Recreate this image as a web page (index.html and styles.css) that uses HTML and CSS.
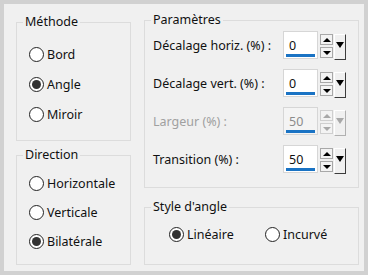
FILE: index.html
```html
<!DOCTYPE html>
<html>
<head>
  <title>Angle</title>
  <link rel="stylesheet" href="styles.css">
</head>
<body>
  <div class="window">
    <div class="col">
      <fieldset class="group method">
        <legend>Méthode</legend>
        <div class="options">
          <label class="option"><span class="radio"></span>Bord</label>
          <label class="option"><span class="radio checked"></span>Angle</label>
          <label class="option"><span class="radio"></span>Miroir</label>
        </div>
      </fieldset>
      <fieldset class="group direction">
        <legend>Direction</legend>
        <div class="options">
          <label class="option"><span class="radio"></span>Horizontale</label>
          <label class="option"><span class="radio"></span>Verticale</label>
          <label class="option"><span class="radio checked"></span>Bilatérale</label>
        </div>
      </fieldset>
    </div>
    <div class="col">
      <fieldset class="group params">
        <legend>Paramètres</legend>
        <div class="rows">
          <div class="row">
            <label>Décalage horiz. (%) :</label>
            <div class="spin">
              <span class="field">0</span>
              <span class="steps"><span class="step up"></span><span class="step down"></span></span>
              <span class="drop"></span>
            </div>
          </div>
          <div class="row">
            <label>Décalage vert. (%) :</label>
            <div class="spin">
              <span class="field">0</span>
              <span class="steps"><span class="step up"></span><span class="step down"></span></span>
              <span class="drop"></span>
            </div>
          </div>
          <div class="row disabled">
            <label>Largeur (%) :</label>
            <div class="spin">
              <span class="field">50</span>
              <span class="steps"><span class="step up"></span><span class="step down"></span></span>
              <span class="drop"></span>
            </div>
          </div>
          <div class="row">
            <label>Transition (%) :</label>
            <div class="spin">
              <span class="field">50</span>
              <span class="steps"><span class="step up"></span><span class="step down"></span></span>
              <span class="drop"></span>
            </div>
          </div>
        </div>
      </fieldset>
      <fieldset class="group corner">
        <legend>Style d'angle</legend>
        <div class="options">
          <label class="option"><span class="radio checked"></span>Linéaire</label>
          <label class="option"><span class="radio"></span>Incurvé</label>
        </div>
      </fieldset>
    </div>
  </div>
</body>
</html>
```
FILE: styles.css
```css
body {margin: 0; font: 12.5px "Noto Sans", "Open Sans", sans-serif; color: #111;}

.window {
  box-sizing: border-box;
  width: 368px;
  height: 275px;
  border: 4px solid #d1d1d1;
  background: #f0f0f0;
  display: grid;
  grid-template-columns: 115px 215px;
  column-gap: 13px;
  align-items: start;
  padding: 8px 5px 0 12px;
}

.col {display: flex; flex-direction: column;}
.col:first-child {margin-top: 2px; gap: 6px;}
.col:last-child {gap: 11px;}

.group {
  margin: 0;
  padding: 0;
  min-width: 0;
  border: 1px solid #dcdcdc;
}
.group legend {
  margin-left: 6px;
  padding: 0 2px;
  line-height: 16px;
}

.options {display: flex; flex-direction: column;}
.option {display: flex; align-items: center; gap: 3px; height: 20px;}

.method .options {padding: 14px 0 16px 12px; gap: 10px;}
.direction .options {padding: 10px 0 13px 12px; gap: 9px;}
.corner .options {flex-direction: row; padding: 9px 0 20px 24px;}
.corner .option:first-child {width: 96px;}

/* radio buttons */
.radio {
  box-sizing: border-box;
  width: 15px;
  height: 15px;
  border: 1px solid #222;
  border-radius: 50%;
  background: #fff;
  display: flex;
  align-items: center;
  justify-content: center;
}
.radio.checked::after {
  content: '';
  width: 9px;
  height: 9px;
  border-radius: 50%;
  background: #333;
}

/* parameter rows */
.rows {display: flex; flex-direction: column; gap: 10px; padding: 3px 0 14px 8px;}
.row {display: flex; align-items: center; height: 28px;}
.row label {width: 130px;}
.row.disabled label {color: #a0a0a0;}

.spin {display: flex; align-items: flex-start; height: 28px;}
.field {
  box-sizing: border-box;
  width: 35px;
  height: 28px;
  padding: 1px 0 0 5px;
  line-height: 26px;
  border: 1px solid #d6d6d6;
  background: linear-gradient(#1a73c4, #1a73c4) no-repeat 2px calc(100% - 1px) / calc(100% - 4px) 3px, #fff;
}
.disabled .field {color: #8c8c8c; background-color: #f4f4f4;}

.steps {display: flex; flex-direction: column; gap: 2px; margin: 3px 0 0 2px;}
.step {
  box-sizing: border-box;
  width: 13px;
  height: 11px;
  border: 1px solid #a8a8a8;
  background: #f3f3f3;
  display: flex;
  align-items: center;
  justify-content: center;
}
.step::before {
  content: '';
  border-left: 4px solid transparent;
  border-right: 4px solid transparent;
}
.step.up::before {border-bottom: 4px solid #000;}
.step.down::before {border-top: 4px solid #000;}

.drop {
  box-sizing: border-box;
  width: 12px;
  height: 26px;
  margin: 3px 0 0 1px;
  padding-top: 7px;
  border: 1px solid;
  border-color: #fff #3c3c3c #3c3c3c #fff;
  background: #f0f0f0;
  display: flex;
  justify-content: center;
}
.drop::before {
  content: '';
  border-left: 4px solid transparent;
  border-right: 4px solid transparent;
  border-top: 6px solid #000;
}

.disabled .step {border-color: #cfcfcf;}
.disabled .step.up::before {border-bottom-color: #a8a8a8;}
.disabled .step.down::before {border-top-color: #a8a8a8;}
.disabled .drop {border-color: #fff #b0b0b0 #b0b0b0 #fff;}
.disabled .drop::before {border-top-color: #a8a8a8;}
```
